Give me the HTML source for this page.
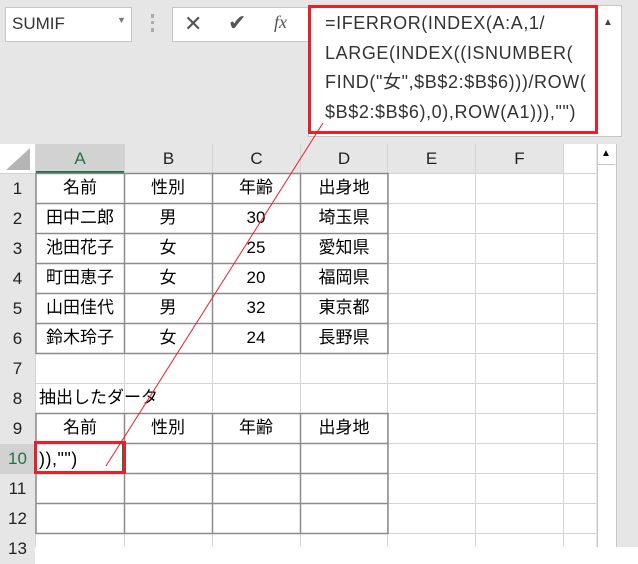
<!DOCTYPE html>
<html><head><meta charset="utf-8"><style>
body{margin:0;width:638px;height:547px;overflow:hidden;background:#fff;font-family:"Liberation Sans","Noto Sans CJK JP",sans-serif;position:relative}
.a{position:absolute}
.cell{position:absolute;height:30px;line-height:30px;font-size:17px;color:#000;text-align:center}
.rh{position:absolute;left:0;width:35px;height:30px;line-height:30px;font-size:17px;text-align:center;color:#222;background:#e6e6e6}
.ch{position:absolute;top:144px;height:29px;line-height:29px;font-size:17px;text-align:center;color:#222;background:#e6e6e6}
</style></head><body>
<div class="a" style="left:0;top:0;width:638px;height:144px;background:#e6e6e6"></div>
<div class="a" style="left:5px;top:7px;width:125px;height:33px;background:#fff;border:1px solid #c6c6c6"></div>
<div class="a" style="left:12px;top:14px;font-size:17px;color:#333">SUMIF</div>
<div class="a" style="left:117px;top:15px;font-size:9px;color:#777">▼</div>
<div class="a" style="left:151px;top:14px;width:3px;height:18px;border-left:3px dotted #aaa"></div>
<div class="a" style="left:172px;top:7px;width:136px;height:33px;background:#fff;border:1px solid #c6c6c6"></div>
<div class="a" style="left:184px;top:11px;font-size:22px;color:#555">✕</div>
<div class="a" style="left:228px;top:10px;font-size:22px;color:#555">✔</div>
<div class="a" style="left:274px;top:12px;font-size:18px;color:#555;font-family:'Liberation Serif',serif;font-style:italic">fx</div>
<div class="a" style="left:308px;top:5px;width:312px;height:130px;background:#fff;border:1px solid #c6c6c6"></div>
<div class="a" style="left:603px;top:17px;font-size:10px;color:#444">▲</div>
<div class="a" style="left:308px;top:5px;width:284px;height:123px;border:3px solid #e8202a"></div>
<div class="a" style="left:325px;top:9px;font-size:18px;line-height:29.5px;letter-spacing:0.6px;color:#333;white-space:pre">=IFERROR(INDEX(A:A,1/
LARGE(INDEX((ISNUMBER(
FIND("女",$B$2:$B$6)))/ROW(
$B$2:$B$6),0),ROW(A1))),"")</div>

<svg class="a" style="left:0;top:0" width="638" height="547">
<polygon points="6,170 30,148 30,170" fill="#b5b5b5"/>
<g stroke="#d4d4d4" stroke-width="1">
<line x1="35.5" y1="144" x2="35.5" y2="547"/>
<line x1="387.5" y1="144" x2="387.5" y2="547"/>
<line x1="475.5" y1="144" x2="475.5" y2="547"/>
<line x1="563.5" y1="144" x2="563.5" y2="547"/>
<line x1="124.5" y1="144" x2="124.5" y2="173"/><line x1="212.5" y1="144" x2="212.5" y2="173"/><line x1="300.5" y1="144" x2="300.5" y2="173"/>
<line x1="124.5" y1="353" x2="124.5" y2="413"/><line x1="212.5" y1="353" x2="212.5" y2="413"/><line x1="300.5" y1="353" x2="300.5" y2="413"/>
<line x1="124.5" y1="533" x2="124.5" y2="547"/><line x1="212.5" y1="533" x2="212.5" y2="547"/><line x1="300.5" y1="533" x2="300.5" y2="547"/>
<line x1="0" y1="173.5" x2="596" y2="173.5"/>
<line x1="0" y1="203.5" x2="596" y2="203.5"/><line x1="0" y1="233.5" x2="596" y2="233.5"/><line x1="0" y1="263.5" x2="596" y2="263.5"/>
<line x1="0" y1="293.5" x2="596" y2="293.5"/><line x1="0" y1="323.5" x2="596" y2="323.5"/><line x1="0" y1="353.5" x2="596" y2="353.5"/>
<line x1="0" y1="383.5" x2="596" y2="383.5"/><line x1="0" y1="413.5" x2="596" y2="413.5"/><line x1="0" y1="443.5" x2="596" y2="443.5"/>
<line x1="0" y1="473.5" x2="596" y2="473.5"/><line x1="0" y1="503.5" x2="596" y2="503.5"/><line x1="0" y1="533.5" x2="596" y2="533.5"/>
</g>
</svg>
<div class="ch" style="left:36px;width:88px;background:#d2d2d2;color:#217346;border-bottom:2px solid #217346;height:27px">A</div>
<div class="ch" style="left:125px;width:87px">B</div>
<div class="ch" style="left:213px;width:87px">C</div>
<div class="ch" style="left:301px;width:86px">D</div>
<div class="ch" style="left:388px;width:87px">E</div>
<div class="ch" style="left:476px;width:87px">F</div>
<div class="rh" style="top:174px">1</div><div class="rh" style="top:204px">2</div><div class="rh" style="top:234px">3</div>
<div class="rh" style="top:264px">4</div><div class="rh" style="top:294px">5</div><div class="rh" style="top:324px">6</div>
<div class="rh" style="top:354px">7</div><div class="rh" style="top:384px">8</div><div class="rh" style="top:414px">9</div>
<div class="rh" style="top:444px;background:#d2d2d2;color:#217346">10</div><div class="rh" style="top:474px">11</div><div class="rh" style="top:504px">12</div>
<div class="rh" style="top:534px">13</div>
<svg class="a" style="left:0;top:0" width="638" height="547">
<g stroke="#8c8c8c" stroke-width="1.5" fill="none">
<rect x="36" y="173.5" width="352" height="180"/>
<line x1="124.5" y1="173" x2="124.5" y2="353"/><line x1="212.5" y1="173" x2="212.5" y2="353"/><line x1="300.5" y1="173" x2="300.5" y2="353"/>
<line x1="36" y1="203.5" x2="388" y2="203.5"/><line x1="36" y1="233.5" x2="388" y2="233.5"/><line x1="36" y1="263.5" x2="388" y2="263.5"/><line x1="36" y1="293.5" x2="388" y2="293.5"/><line x1="36" y1="323.5" x2="388" y2="323.5"/>
<rect x="36" y="413.5" width="352" height="120"/>
<line x1="124.5" y1="413" x2="124.5" y2="533"/><line x1="212.5" y1="413" x2="212.5" y2="533"/><line x1="300.5" y1="413" x2="300.5" y2="533"/>
<line x1="36" y1="443.5" x2="388" y2="443.5"/><line x1="36" y1="473.5" x2="388" y2="473.5"/><line x1="36" y1="503.5" x2="388" y2="503.5"/>
</g>
</svg>
<div class="a" style="left:596px;top:144px;width:42px;height:403px;background:#e6e6e6"></div>
<div class="a" style="left:597px;top:144px;width:18px;height:403px;background:#fff;border-left:1px solid #c6c6c6;border-right:1px solid #c6c6c6"></div>
<div class="a" style="left:597px;top:144px;width:18px;height:20px;border-bottom:1px solid #c6c6c6;font-size:10px;text-align:center;line-height:20px">▲</div>

<div class="cell" style="left:36px;top:173px;width:88px">名前</div><div class="cell" style="left:124px;top:173px;width:88px">性別</div><div class="cell" style="left:212px;top:173px;width:88px">年齢</div><div class="cell" style="left:300px;top:173px;width:88px">出身地</div>
<div class="cell" style="left:36px;top:203px;width:88px">田中二郎</div><div class="cell" style="left:124px;top:203px;width:88px">男</div><div class="cell" style="left:212px;top:203px;width:88px">30</div><div class="cell" style="left:300px;top:203px;width:88px">埼玉県</div>
<div class="cell" style="left:36px;top:233px;width:88px">池田花子</div><div class="cell" style="left:124px;top:233px;width:88px">女</div><div class="cell" style="left:212px;top:233px;width:88px">25</div><div class="cell" style="left:300px;top:233px;width:88px">愛知県</div>
<div class="cell" style="left:36px;top:263px;width:88px">町田恵子</div><div class="cell" style="left:124px;top:263px;width:88px">女</div><div class="cell" style="left:212px;top:263px;width:88px">20</div><div class="cell" style="left:300px;top:263px;width:88px">福岡県</div>
<div class="cell" style="left:36px;top:293px;width:88px">山田佳代</div><div class="cell" style="left:124px;top:293px;width:88px">男</div><div class="cell" style="left:212px;top:293px;width:88px">32</div><div class="cell" style="left:300px;top:293px;width:88px">東京都</div>
<div class="cell" style="left:36px;top:323px;width:88px">鈴木玲子</div><div class="cell" style="left:124px;top:323px;width:88px">女</div><div class="cell" style="left:212px;top:323px;width:88px">24</div><div class="cell" style="left:300px;top:323px;width:88px">長野県</div>
<div class="cell" style="left:39px;top:383px;text-align:left">抽出したダータ</div>
<div class="cell" style="left:36px;top:413px;width:88px">名前</div><div class="cell" style="left:124px;top:413px;width:88px">性別</div><div class="cell" style="left:212px;top:413px;width:88px">年齢</div><div class="cell" style="left:300px;top:413px;width:88px">出身地</div>
<div class="a" style="left:35px;top:442px;width:89px;height:31px;border:2px solid #217346;box-sizing:border-box"></div>
<div class="cell" style="left:39px;top:444px;text-align:left;font-size:18px;letter-spacing:0.5px">)),"")</div>
<div class="a" style="left:34px;top:441px;width:92px;height:33px;border:3px solid #e8202a;box-sizing:border-box"></div>
<svg class="a" style="left:0;top:0" width="638" height="547"><line x1="323" y1="123" x2="106" y2="466" stroke="#e8202a" stroke-width="1"/></svg>
</body></html>
